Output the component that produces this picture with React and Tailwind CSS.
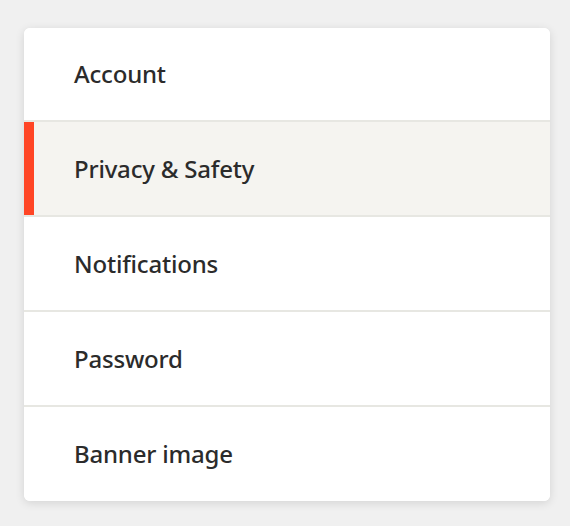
import { useState } from "react";

export default function App() {
    const [active, setActive] = useState("privacy");

    const items = [
        { id: "account", label: "Account" },
        { id: "privacy", label: "Privacy & Safety" },
        { id: "notifications", label: "Notifications" },
        { id: "password", label: "Password" },
        { id: "banner", label: "Banner image" },
    ];

    return (
        <div
            className="min-h-screen bg-[#f0f0f0] pt-[28px] pl-[24px]"
            style={{ fontFamily: '"Noto Sans", "Open Sans", sans-serif' }}
        >
            <nav className="w-[526px] bg-white rounded-[6px] overflow-hidden shadow-[0_2px_10px_rgba(0,0,0,0.12)]">
                {items.map((item, index) => (
                    <button
                        key={item.id}
                        onClick={() => setActive(item.id)}
                        className={
                            "relative flex items-center w-full pl-[50px] text-left text-[24px] font-medium text-[#2b2b2b] tracking-[-0.2px] " +
                            (index === 0
                                ? "h-[94px] border-b-2 border-[#e7e7e2] "
                                : index < items.length - 1
                                ? "h-[95px] border-b-2 border-[#e7e7e2] "
                                : "h-[94px] ") +
                            (active === item.id ? "bg-[#f5f4f0]" : "bg-white")
                        }
                    >
                        {active === item.id && (
                            <span className="absolute left-0 top-0 bottom-0 w-[10px] bg-[#ff4525]" />
                        )}
                        {item.label}
                    </button>
                ))}
            </nav>
        </div>
    );
}
